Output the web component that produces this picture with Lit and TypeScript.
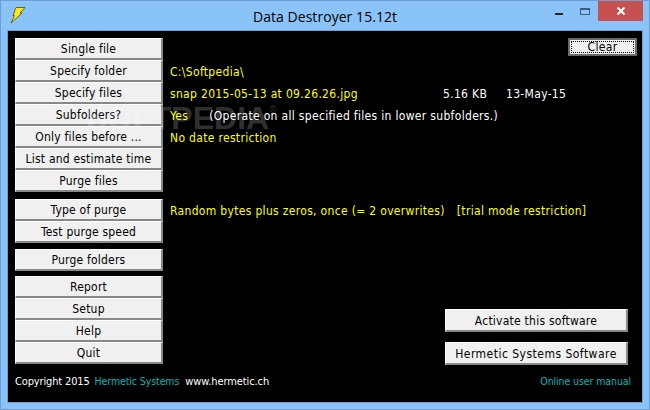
import { LitElement, html, css } from "lit";
import { customElement } from "lit/decorators.js";

const Y = (s: string) => html`<span class="y">${s}</span>`;

@customElement("app-root")
export class AppRoot extends LitElement {
  static styles = css`
    :host {
      display: block;
      width: 650px;
      height: 410px;
      font-family: "DejaVu Sans", Tahoma, sans-serif;
      font-stretch: condensed;
      font-size: 12px;
    }
    * { box-sizing: border-box; }
    .win {
      position: relative;
      width: 650px;
      height: 410px;
      background: #8ac3f8;
      border: 1px solid #6f9fd0;
      display: flex;
      flex-direction: column;
      overflow: hidden;
    }
    .title {
      height: 29px;
      flex: none;
      display: flex;
      align-items: flex-start;
      padding-left: 9px;
      position: relative;
    }
    .bolt { margin-top: 5px; }
    .title-text {
      position: absolute;
      left: 0;
      right: 0;
      top: 6px;
      text-align: center;
      font-family: "Open Sans", "Noto Sans", sans-serif;
      font-stretch: normal;
      font-size: 14px;
      letter-spacing: 0.05px;
      color: #000;
    }
    .controls {
      margin-left: auto;
      display: flex;
      margin-right: 6px;
    }
    .ctl {
      height: 20px;
      display: flex;
      align-items: center;
      justify-content: center;
    }
    .min { width: 27px; }
    .max { width: 26px; }
    .close { width: 45px; background: #c75050; }
    .client {
      flex: 1;
      margin: 0 6px 6px;
      background: #000;
      display: flex;
      flex-direction: column;
      padding: 7px 5px 0 7px;
      position: relative;
      border: 1px solid #6f9fd0;
    }
    .main { display: flex; flex: 1; min-height: 0; }
    .left { width: 148px; flex: none; display: flex; flex-direction: column; }
    .right { flex: 1; display: flex; flex-direction: column; padding-left: 7px; min-width: 0; }
    .btn {
      height: 21.5px;
      margin-bottom: 0.5px;
      padding-top: 1px;
      background: #f0f0f0;
      border-top: 1px solid #fff;
      border-left: 1px solid #fff;
      border-right: 2px solid #888;
      border-bottom: 2px solid #888;
      color: #000;
      letter-spacing: 0.2px;
      display: flex;
      align-items: center;
      justify-content: center;
      white-space: nowrap;
    }
    .g1 { margin-top: 7px; }
    .g2 { margin-top: 6px; }
    .g3 { margin-top: 5px; }
    .row {
      height: 22px;
      padding-top: 1px;
      display: flex;
      align-items: center;
      white-space: nowrap;
      color: #fff;
      letter-spacing: 0.32px;
    }
    .y { color: #ffff00; }
    .toprow { justify-content: flex-end; align-items: flex-start; padding-top: 0; }
    .clear {
      width: 69px;
      height: 18px;
      background: #f0f0f0;
      border: 2px solid #6a6a6a;
      display: flex;
      align-items: center;
      justify-content: center;
      color: #000;
      position: relative;
    }
    .clear::after {
      content: "";
      position: absolute;
      inset: 1px;
      border: 1px dotted #000;
    }
    .name { width: 273px; }
    .size { width: 63px; }
    .sub { margin-left: 21px; }
    .trial { margin-left: 12px; }
    .mt-type { margin-top: 51px; }
    .bigs {
      margin-top: auto;
      align-self: flex-end;
      display: flex;
      flex-direction: column;
      gap: 10px;
      width: 183px;
      margin-right: 9px;
    }
    .big { height: 23px; margin: 0; letter-spacing: 0.24px; }
    .wide { letter-spacing: 0.48px; }
    .footer {
      height: 37px;
      flex: none;
      display: flex;
      align-items: center;
      white-space: nowrap;
      color: #fff;
      font-size: 11px;
      padding: 0 6px 5px 0;
    }
    .copy { letter-spacing: -0.15px; }
    .teal { color: #00b8b8; font-size: 10.5px; letter-spacing: -0.1px; }
    .hs { margin-left: 5px; }
    .url { margin-left: 6px; letter-spacing: -0.1px; }
    .man { margin-left: auto; }
    .wm {
      position: absolute;
      left: 78px;
      top: 69px;
      font-family: "Liberation Sans", sans-serif;
      font-stretch: normal;
      font-weight: 700;
      font-size: 32px;
      color: rgba(255, 255, 255, 0.2);
      pointer-events: none;
      white-space: nowrap;
    }
    .wm sup { font-size: 10px; font-weight: 400; vertical-align: 16px; line-height: 0; }
    svg { display: block; }
  `;

  render() {
    return html`
      <div class="win">
        <div class="title">
          <svg class="bolt" width="16" height="18" viewBox="0 0 16 18">
            <path d="M6 1.5 L15 1.5 L10 7 L12 7 L1 17 L4.5 9.5 L3 9.5 Z" fill="#ffe81a" stroke="#4a4a20" stroke-width="0.8"/>
          </svg>
          <div class="title-text">Data Destroyer 15.12t</div>
          <div class="controls">
            <div class="ctl min">
              <svg width="10" height="10" viewBox="0 0 10 10"><rect x="1" y="7" width="8" height="2" fill="#222"/></svg>
            </div>
            <div class="ctl max">
              <svg width="12" height="10" viewBox="0 0 12 10"><rect x="1.5" y="2.5" width="9" height="6" fill="none" stroke="#3a5f80"/><rect x="1" y="2" width="10" height="2" fill="#3a5f80"/></svg>
            </div>
            <div class="ctl close">
              <svg width="10" height="10" viewBox="0 0 10 10"><path d="M1.5 1.5 L8.5 8.5 M8.5 1.5 L1.5 8.5" stroke="#fff" stroke-width="2"/></svg>
            </div>
          </div>
        </div>
        <div class="client">
          <div class="main">
            <div class="left">
              <div class="btn">Single file</div>
              <div class="btn">Specify folder</div>
              <div class="btn">Specify files</div>
              <div class="btn">Subfolders?</div>
              <div class="btn">Only files before ...</div>
              <div class="btn">List and estimate time</div>
              <div class="btn">Purge files</div>
              <div class="btn g1">Type of purge</div>
              <div class="btn">Test purge speed</div>
              <div class="btn g2">Purge folders</div>
              <div class="btn g3">Report</div>
              <div class="btn">Setup</div>
              <div class="btn">Help</div>
              <div class="btn">Quit</div>
            </div>
            <div class="right">
              <div class="row toprow"><div class="clear">Clear</div></div>
              <div class="row">${Y("C:\\Softpedia\\")}</div>
              <div class="row">
                <span class="y name">snap 2015-05-13 at 09.26.26.jpg</span>
                <span class="size">5.16 KB</span>
                <span>13-May-15</span>
              </div>
              <div class="row">
                ${Y("Yes")}<span class="sub">(Operate on all specified files in lower subfolders.)</span>
              </div>
              <div class="row">${Y("No date restriction")}</div>
              <div class="row mt-type">
                ${Y("Random bytes plus zeros, once (= 2 overwrites)")}
                <span class="y trial">[trial mode restriction]</span>
              </div>
              <div class="bigs">
                <div class="btn big">Activate this software</div>
                <div class="btn big wide">Hermetic Systems Software</div>
              </div>
            </div>
          </div>
          <div class="footer">
            <span class="copy">Copyright 2015</span>
            <span class="teal hs">Hermetic Systems</span>
            <span class="url">www.hermetic.ch</span>
            <span class="teal man">Online user manual</span>
          </div>
          <div class="wm">SOFTPEDIA<sup>®</sup></div>
        </div>
      </div>
    `;
  }
}
